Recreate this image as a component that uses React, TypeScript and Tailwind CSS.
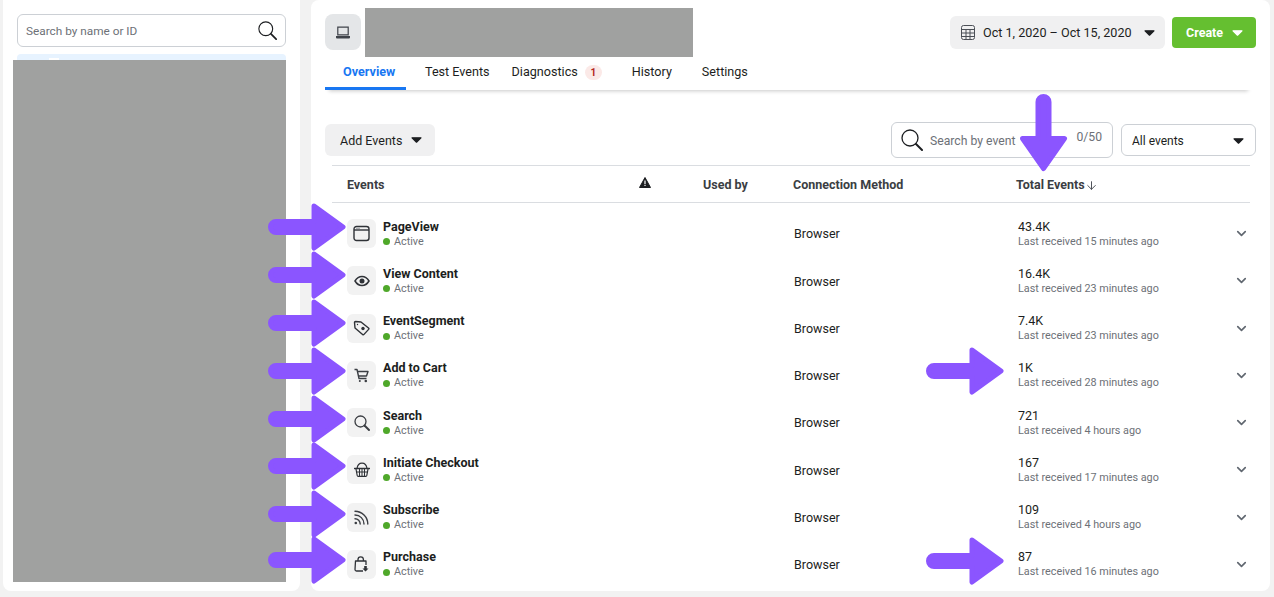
import React from 'react';
import { ChevronDown, ArrowDown } from 'lucide-react';

const Caret = ({ color = '#1c1e21' }: { color?: string }) => (
  <svg width="11" height="6" viewBox="0 0 11 6" fill={color} stroke={color} strokeWidth="1.2" strokeLinejoin="round">
    <path d="M1 .8h9L5.5 5.2z" />
  </svg>
);

const BigSearch = ({ size = 19 }: { size?: number }) => (
  <svg width={size} height={size} viewBox="0 0 22 22" fill="none" stroke="#1c1e21" strokeWidth="1.3">
    <circle cx="9" cy="9" r="8" />
    <path d="M15 15l6 6" strokeWidth="2" strokeLinecap="round" />
  </svg>
);

const WindowIcon = () => (
  <svg width="17" height="17" viewBox="0 0 17 17" fill="none" stroke="#2f3237" strokeWidth="1.4">
    <rect x="1" y="1.500" width="15" height="14" rx="2.500" />
    <path d="M1 5h15" />
    <path d="M3 3.300h4" stroke="#9a9da1" strokeWidth="1" />
  </svg>
);

const EyeIcon = () => (
  <svg width="16" height="12" viewBox="0 0 16 12" fill="none" stroke="#2f3237" strokeWidth="1.5">
    <path d="M1 6c1.800-3 4-4.500 7-4.500S13.200 3 15 6c-1.800 3-4 4.500-7 4.500S2.800 9 1 6z" />
    <circle cx="8" cy="6" r="2.500" fill="#2f3237" stroke="none" />
  </svg>
);

const TagIcon = () => (
  <svg width="17" height="16" viewBox="0 0 17 16" fill="none" stroke="#2f3237" strokeWidth="1.4" strokeLinejoin="round">
    <path d="M1.500 2.500a1 1 0 0 1 1-1l5.500.5 7.500 6a1 1 0 0 1 .1 1.400l-4.600 5a1 1 0 0 1-1.400.1L2 8z" />
    <circle cx="10" cy="8.500" r="1.700" fill="#2f3237" stroke="none" />
    <circle cx="4.500" cy="4.500" r=".7" fill="#2f3237" stroke="none" />
  </svg>
);

const CartIcon = () => (
  <svg width="15" height="15" viewBox="0 0 15 15" fill="none" stroke="#3b3e43" strokeWidth="1.4" strokeLinejoin="round">
    <path d="M.5 1.500h2.500l2 9h7.500" />
    <path d="M3.400 3.500h10.600l-1.500 4.500H4.500" />
    <circle cx="5.800" cy="13" r="1" fill="#3b3e43" stroke="none" />
    <circle cx="11.800" cy="13" r="1.300" fill="#3b3e43" stroke="none" />
  </svg>
);

const SearchIcon = () => (
  <svg width="16" height="16" viewBox="0 0 16 16" fill="none" stroke="#3b3e43" strokeWidth="1.3">
    <circle cx="6.500" cy="6.500" r="5.500" />
    <path d="M10.500 10.500l4.500 4.500" strokeWidth="1.900" strokeLinecap="round" />
  </svg>
);

const BasketIcon = () => (
  <svg width="16" height="15" viewBox="0 0 16 15" fill="none" stroke="#2f3237" strokeWidth="1.2" strokeLinejoin="round">
    <path d="M3 6.500C3.500 3 5.500 1.200 8 1.200S12.500 3 13 6.500" />
    <path d="M.5 6.500h15" strokeWidth="1.500" strokeLinecap="round" />
    <path d="M2 7l1.200 6.500a1 1 0 0 0 1 .8h7.600a1 1 0 0 0 1-.8L14 7" />
    <path d="M2.500 10h11M5.500 7v7M8 7v7M10.500 7v7" strokeWidth="1" />
  </svg>
);

const RssIcon = () => (
  <svg width="15" height="15" viewBox="0 0 15 15" fill="none" stroke="#3b3e43" strokeWidth="1.400" strokeLinecap="round">
    <path d="M1 1.200c7 0 12.800 5.800 12.800 12.800" />
    <path d="M1 5c5 0 9 4 9 9" />
    <path d="M1 8.800c2.900 0 5.200 2.300 5.200 5.200" />
    <circle cx="1.800" cy="13" r="1.300" fill="#3b3e43" stroke="none" />
  </svg>
);

const BagIcon = () => (
  <svg width="15" height="16" viewBox="0 0 15 16" fill="none" stroke="#2f3237" strokeWidth="1.300" strokeLinejoin="round">
    <path d="M12 9V5H1.500L1 13.500A1.500 1.500 0 0 0 2.500 15H9" />
    <path d="M4 5V3.500a2.700 2.700 0 0 1 5.400 0V5" />
    <path d="M11.500 15.500l-3-3h1.700V10h2.600v2.500h1.700z" fill="#2f3237" stroke="none" />
  </svg>
);

const events = [
  { name: 'PageView', icon: <WindowIcon />, total: '43.4K', last: 'Last received 15 minutes ago' },
  { name: 'View Content', icon: <EyeIcon />, total: '16.4K', last: 'Last received 23 minutes ago' },
  { name: 'EventSegment', icon: <TagIcon />, total: '7.4K', last: 'Last received 23 minutes ago' },
  { name: 'Add to Cart', icon: <CartIcon />, total: '1K', last: 'Last received 28 minutes ago' },
  { name: 'Search', icon: <SearchIcon />, total: '721', last: 'Last received 4 hours ago' },
  { name: 'Initiate Checkout', icon: <BasketIcon />, total: '167', last: 'Last received 17 minutes ago' },
  { name: 'Subscribe', icon: <RssIcon />, total: '109', last: 'Last received 4 hours ago' },
  { name: 'Purchase', icon: <BagIcon />, total: '87', last: 'Last received 16 minutes ago' },
];

const RightArrow = ({ className }: { className: string }) => (
  <svg className={`absolute ${className}`} width="80" height="50" viewBox="0 0 80 50" fill="#8b55ff">
    <path d="M8 19.500H46V4L75 25 46 46V30.500H8a5.500 5.500 0 0 1 0-11z" stroke="#8b55ff" strokeWidth="5" strokeLinejoin="round" />
  </svg>
);

const arrows = [
  'left-[268px] top-[202px]',
  'left-[268px] top-[250px]',
  'left-[268px] top-[298px]',
  'left-[268px] top-[346px]',
  'left-[268px] top-[394px]',
  'left-[268px] top-[441px]',
  'left-[268px] top-[489px]',
  'left-[268px] top-[535px]',
  'left-[926px] top-[346px]',
  'left-[926px] top-[536px]',
];

export default function App() {
  return (
    <div className="relative w-[1274px] h-[597px] overflow-hidden bg-[#f2f2f2] font-['Roboto',sans-serif] text-[#1c1e21]">
      <div className="flex gap-[11px] pl-[3px] h-[591px]">
        {/* left column */}
        <div className="w-[297px] h-full bg-white rounded-b-lg pt-[14px] pl-[14px] pr-[14px]">
          <div className="flex items-center justify-between h-[33px] border border-[#ccd0d5] rounded-md pl-2 pr-2">
            <span className="text-[11.8px] pt-[2px] text-[#6d7177]">Search by name or ID</span>
            <BigSearch />
          </div>
          <div className="mt-[7px] h-2 bg-[#e7f3ff] rounded-t pt-[4px]">
            <div className="ml-[32px] w-[10px] h-[2px] bg-white" />
          </div>
        </div>

        {/* main panel */}
        <div className="w-[959px] h-full bg-white rounded-lg">
          <div className="flex justify-between pt-[14px] pl-[14px] pr-[14px]">
            <div className="w-9 h-9 flex items-center justify-center bg-[#e4e6e8] rounded-lg">
              <svg width="14" height="13" viewBox="0 0 14 13" fill="#3f434a">
                <path d="M1.200.500h11.600v9H1.200zM2.400 1.800v6.400h9.200V1.800zM0 10h14v1.500a1 1 0 0 1-1 1H1a1 1 0 0 1-1-1z" fillRule="evenodd" />
              </svg>
            </div>
            <div className="flex items-start gap-[7px] pt-[2px]">
              <div className="flex items-center w-[215px] h-[33px] bg-[#f0f0f1] rounded-md pl-[11px] pr-[10px]">
                <svg width="14" height="15" viewBox="0 0 14 15" fill="none" stroke="#4b4f56" strokeWidth="1">
                  <rect x="0.500" y="0.500" width="13" height="14" rx="2" />
                  <path d="M0.500 4.500h13M0.500 8h13M0.500 11.500h13M5 4.500v10M9 4.500v10" />
                </svg>
                <span className="ml-2 pt-px text-[12.6px] whitespace-nowrap">Oct 1, 2020 – Oct 15, 2020</span>
                <span className="ml-auto flex"><Caret /></span>
              </div>
              <div className="flex items-center justify-between mt-px w-[84px] h-[31px] bg-[#65bf30] rounded pl-[14px] pr-[13px] text-white text-[12.500px] font-bold">
                <span className="pt-[2px]">Create</span>
                <Caret color="#ffffff" />
              </div>
            </div>
          </div>

          <div className="mx-[14px] w-[927px] h-[40px] flex shadow-[0_5px_4px_-4px_rgba(0,0,0,0.22)] text-[12.6px]">
            <div className="w-[81px] h-[40px] pt-[13px] pl-[18px] font-bold text-[#1877f2] border-b-[3px] border-[#1877f2]">Overview</div>
            <div className="ml-[19px] pt-[13px]">Test Events</div>
            <div className="ml-[22px] pt-[13px] flex items-start">
              Diagnostics
              <span className="ml-[7px] mt-[2px] w-[17px] h-[15px] rounded-full bg-[#fbe9e7] text-[#b3261e] text-[10px] font-bold flex items-center justify-center">1</span>
            </div>
            <div className="ml-[30px] pt-[13px]">History</div>
            <div className="ml-[30px] pt-[13px]">Settings</div>
          </div>

          <div className="flex items-center pl-[14px] pr-[14px] mt-[32px] h-[36px]">
            <div className="flex items-center justify-between w-[110px] h-8 bg-[#f0f0f1] rounded-md pl-[15px] pr-[13px] pt-[3px] text-[12.5px]">
              Add Events
              <span className="-mt-[3px] flex"><Caret /></span>
            </div>
            <div className="ml-auto flex items-center w-[222px] h-9 border border-[#ccd0d5] rounded-md pl-[9px] pr-[10px]">
              <BigSearch size={22} />
              <span className="ml-[7px] pt-[2px] text-[12.2px] text-[#6d7177]">Search by event</span>
              <span className="ml-auto -mt-[5px] text-[12.2px] text-[#6d7177]">0/50</span>
            </div>
            <div className="ml-2 flex items-center justify-between w-[135px] h-8 border border-[#ccd0d5] rounded-md pl-[10px] pr-[11px] pt-px text-xs">
              All events
              <Caret />
            </div>
          </div>

          <div className="ml-[21px] w-[918px] mt-[7px] border-t border-[#dadde1]">
            <div className="grid grid-cols-[292px_64px_90px_223px_1fr] items-center h-[37px] pl-[15px] pt-[3px] text-[12.5px] font-bold text-[#3b3e43] border-b border-[#dadde1]">
              <span>Events</span>
              <svg width="12" height="11" viewBox="0 0 12 11" fill="#1c1e21" className="-mt-[6px]">
                <path d="M6 .500l5.500 10H.500z" stroke="#1c1e21" strokeLinejoin="round" />
                <path d="M5.400 3.500h1.200v3.500H5.400zM5.400 7.800h1.200v1.200H5.400z" fill="#fff" />
              </svg>
              <span>Used by</span>
              <span>Connection Method</span>
              <span className="flex items-center">Total Events <ArrowDown size={13} strokeWidth={1.8} color="#4b4f56" /></span>
            </div>
            <div className="pt-[7px]">
              {events.map((e) => (
                <div key={e.name} className="grid grid-cols-[36px_411px_224px_216px_1fr] items-center h-[47.25px] pl-[15px]">
                  <div className="w-[29px] h-[29px] flex items-center justify-center bg-[#f2f2f2] rounded-md">{e.icon}</div>
                  <div>
                    <div className="text-[12.5px] font-bold leading-[15px]">{e.name}</div>
                    <div className="flex items-center gap-[4px] mt-px text-[10.8px] leading-[14px] text-[#6d7177]">
                      <span className="w-[7px] h-[7px] rounded-full bg-[#4fa82a]" />
                      Active
                    </div>
                  </div>
                  <div className="pt-[2px] text-[12.5px]">Browser</div>
                  <div>
                    <div className="text-[12.5px] leading-[15px]">{e.total}</div>
                    <div className="mt-px text-[10.8px] leading-[14px] text-[#6d7177]">{e.last}</div>
                  </div>
                  <ChevronDown size={15} color="#606770" strokeWidth={2.6} />
                </div>
              ))}
            </div>
          </div>
        </div>
      </div>

      {/* redacted areas */}
      <div className="absolute left-[13px] top-[60px] w-[273px] h-[522px] bg-[#a0a1a0]" />
      <div className="absolute left-[365px] top-[8px] w-[328px] h-[49px] bg-[#a0a1a0]" />

      {/* annotation arrows */}
      {arrows.map((pos) => (
        <RightArrow key={pos} className={pos} />
      ))}
      <svg className="absolute left-[1018px] top-[92px]" width="52" height="82" viewBox="0 0 52 82" fill="#8b55ff">
        <path d="M20 10V46.500H4.500L25.500 76.500 46.500 46.500H31V10a5.500 5.500 0 0 0-11 0z" stroke="#8b55ff" strokeWidth="5" strokeLinejoin="round" />
      </svg>
    </div>
  );
}
